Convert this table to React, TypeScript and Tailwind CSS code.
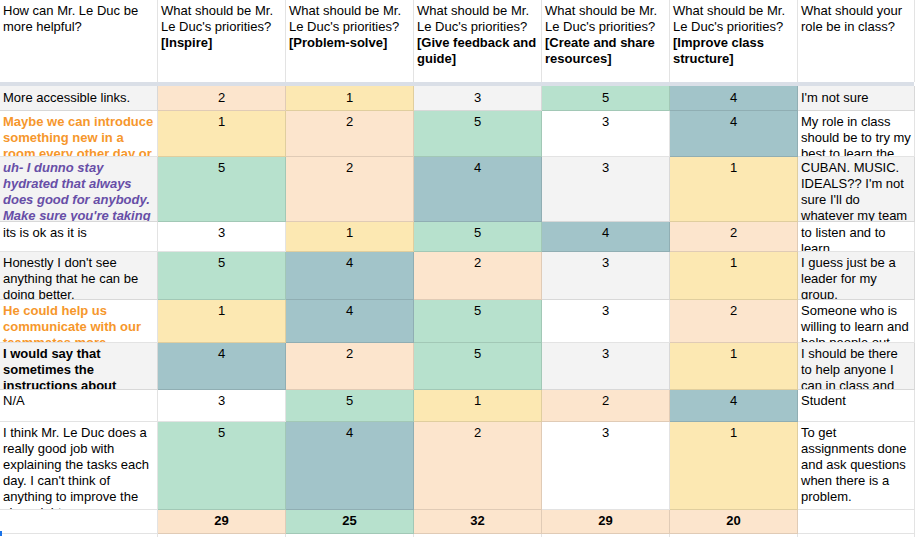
import React from "react";

const PEACH = "bg-[#fce5cd]";
const YELLOW = "bg-[#fce8b2]";
const GREEN = "bg-[#b7e1cd]";
const TEAL = "bg-[#a2c4c9]";
const GRAY = "bg-[#f3f3f3]";
const WHITE = "bg-white";

type Row = {
  h: string;
  pt: string;
  band: "g" | "w";
  text: string;
  style: "n" | "orange" | "purple" | "bold";
  vals: number[];
  role: string;
};

const colorFor = (v: number, band: "g" | "w") => {
  if (v === 1) return YELLOW;
  if (v === 2) return PEACH;
  if (v === 4) return TEAL;
  if (v === 5) return GREEN;
  return band === "g" ? GRAY : WHITE;
};

const rows: Row[] = [
  { h: "h-[25px]", pt: "pt-[4px]", band: "g", text: "More accessible links.", style: "n", vals: [2, 1, 3, 5, 4], role: "I'm not sure" },
  { h: "h-[46px]", pt: "pt-[3px]", band: "w", text: "Maybe we can introduce something new in a room every other day or so to keep things fresh.", style: "orange", vals: [1, 2, 5, 3, 4], role: "My role in class should be to try my best to learn the music." },
  { h: "h-[65px]", pt: "pt-[3px]", band: "g", text: "uh- I dunno stay hydrated that always does good for anybody. Make sure you're taking care of yourself.", style: "purple", vals: [5, 2, 4, 3, 1], role: "CUBAN. MUSIC. IDEALS?? I'm not sure I'll do whatever my team needs." },
  { h: "h-[30px]", pt: "pt-[3px]", band: "w", text: "its is ok as it is", style: "n", vals: [3, 1, 5, 4, 2], role: "to listen and to learn" },
  { h: "h-[48px]", pt: "pt-[3px]", band: "g", text: "Honestly I don't see anything that he can be doing better.", style: "n", vals: [5, 4, 2, 3, 1], role: "I guess just be a leader for my group." },
  { h: "h-[43px]", pt: "pt-[3px]", band: "w", text: "He could help us communicate with our teammates more.", style: "orange", vals: [1, 4, 5, 3, 2], role: "Someone who is willing to learn and help people out." },
  { h: "h-[47px]", pt: "pt-[3px]", band: "g", text: "I would say that sometimes the instructions about assignments are unclear.", style: "bold", vals: [4, 2, 5, 3, 1], role: "I should be there to help anyone I can in class and outside." },
  { h: "h-[32px]", pt: "pt-[3px]", band: "w", text: "N/A", style: "n", vals: [3, 5, 1, 2, 4], role: "Student" },
  { h: "h-[88px]", pt: "pt-[3px]", band: "w", text: "I think Mr. Le Duc does a really good job with explaining the tasks each day. I can't think of anything to improve the class right now.", style: "n", vals: [5, 4, 2, 3, 1], role: "To get assignments done and ask questions when there is a problem." },
];

const textStyle = {
  n: "text-black",
  orange: "text-[#f6972c] font-bold",
  purple: "text-[#674ea7] font-bold italic",
  bold: "text-black font-bold",
};

const B = "border-r border-b border-[rgba(0,0,0,0.11)]";

export default function App() {
  const headers = ["[Inspire]", "[Problem-solve]", "[Give feedback and guide]", "[Create and share resources]", "[Improve class structure]"];
  const totals = [
    { v: 29, c: PEACH },
    { v: 25, c: GREEN },
    { v: 32, c: PEACH },
    { v: 29, c: PEACH },
    { v: 20, c: PEACH },
  ];
  return (
    <div className="relative w-[917px] h-[537px] overflow-hidden bg-white font-['Liberation_Sans',Arial,sans-serif] text-[13px] leading-[16px] text-black">
      {/* header */}
      <div className="flex h-[82px]">
        <div className="w-[158px] shrink-0 border-r border-[rgba(0,0,0,0.11)] pt-[3px] pl-[3px] pr-[2px] overflow-hidden">
          How can Mr. Le Duc be more helpful?
        </div>
        {headers.map((h) => (
          <div key={h} className="w-[128px] shrink-0 border-r border-[rgba(0,0,0,0.11)] pt-[3px] pl-[3px] pr-[2px] overflow-hidden">
            What should be Mr. Le Duc's priorities? <span className="font-bold">{h}</span>
          </div>
        ))}
        <div className="w-[117px] shrink-0 border-r border-[rgba(0,0,0,0.11)] pt-[3px] pl-[3px] pr-[2px] overflow-hidden">
          What should your role be in class?
        </div>
      </div>
      {/* frozen band */}
      <div className="h-[4px] w-[914px] bg-[#dadfe7]" />
      {rows.map((r, i) => {
        const bg = r.band === "g" ? GRAY : WHITE;
        return (
          <div key={i} className={`flex ${r.h}`}>
            <div className={`w-[158px] shrink-0 ${B} ${bg} ${r.pt} pl-[3px] pr-[2px] overflow-hidden ${textStyle[r.style]}`}>
              {r.text}
            </div>
            {r.vals.map((v, j) => (
              <div key={j} className={`w-[128px] shrink-0 ${B} ${colorFor(v, r.band)} ${r.pt} text-center overflow-hidden`}>
                {v}
              </div>
            ))}
            <div className={`w-[117px] shrink-0 ${B} ${bg} ${r.pt} pl-[3px] pr-[2px] overflow-hidden`}>
              {r.role}
            </div>
          </div>
        );
      })}
      {/* totals */}
      <div className="flex h-[24px] font-bold">
        <div className={`w-[158px] shrink-0 ${B} bg-white`} />
        {totals.map((t, j) => (
          <div key={j} className={`w-[128px] shrink-0 ${B} ${t.c} pt-[3px] text-center`}>
            {t.v}
          </div>
        ))}
        <div className={`w-[117px] shrink-0 ${B} bg-white`} />
      </div>
      {/* next empty row */}
      <div className="flex h-[24px]">
        <div className={`w-[158px] shrink-0 ${B}`} />
        {[0, 1, 2, 3, 4].map((j) => (
          <div key={j} className={`w-[128px] shrink-0 ${B}`} />
        ))}
        <div className={`w-[117px] shrink-0 ${B}`} />
      </div>
      <div className="absolute left-0 top-[531px] h-[5px] w-[2px] bg-[#1a73e8]" />
    </div>
  );
}
